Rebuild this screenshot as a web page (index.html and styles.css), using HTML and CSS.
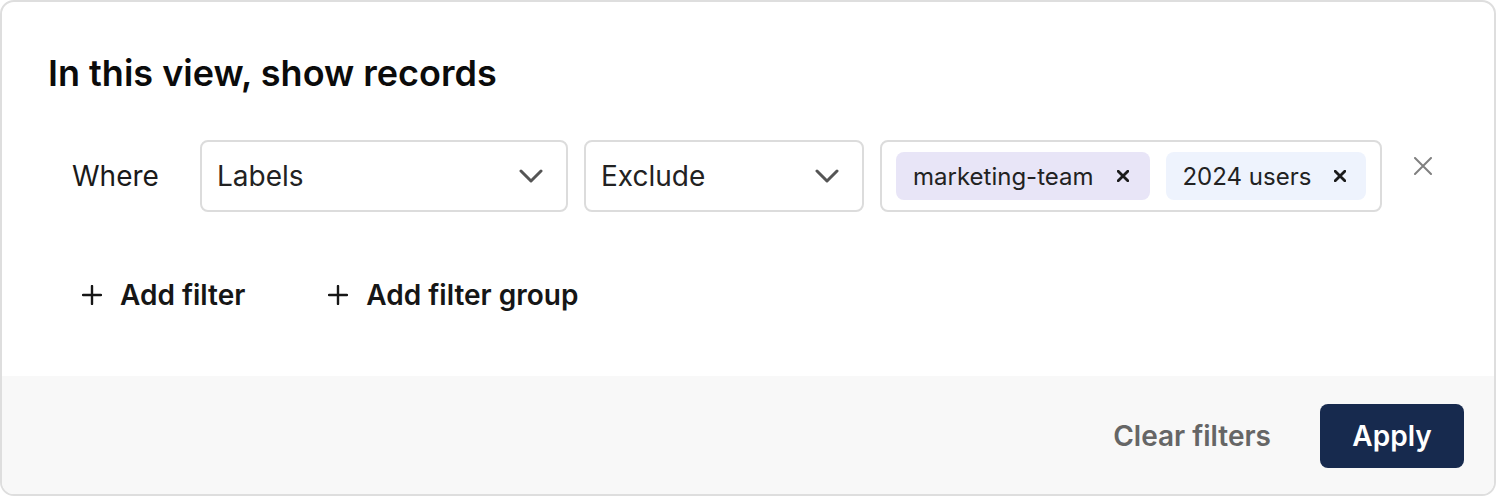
FILE: index.html
```html
<!DOCTYPE html>
<html lang="en">
<head>
  <meta charset="UTF-8">
  <title>Filters</title>
  <link rel="stylesheet" href="styles.css">
</head>
<body>

<div class="panel">
  <div class="panel-body">
    <h1 class="panel-title">In this view, show records</h1>

    <div class="filter-row">
      <span class="where">Where</span>
      <div class="select select-field">
        <span>Labels</span>
        <svg class="chev" width="24" height="14" viewBox="0 0 24 14"><path d="M2 2l10 10 10-10" fill="none" stroke="#555" stroke-width="3" stroke-linecap="round" stroke-linejoin="round"/></svg>
      </div>
      <div class="select select-op">
        <span>Exclude</span>
        <svg class="chev" width="24" height="14" viewBox="0 0 24 14"><path d="M2 2l10 10 10-10" fill="none" stroke="#555" stroke-width="3" stroke-linecap="round" stroke-linejoin="round"/></svg>
      </div>
      <div class="tags">
        <span class="tag tag-purple">marketing-team
          <svg width="12" height="12" viewBox="0 0 12 12"><path d="M1.2 1.2l9.6 9.6M10.8 1.2l-9.6 9.6" stroke="#1c1c1c" stroke-width="2.8" stroke-linecap="round"/></svg>
        </span>
        <span class="tag tag-blue">2024 users
          <svg width="12" height="12" viewBox="0 0 12 12"><path d="M1.2 1.2l9.6 9.6M10.8 1.2l-9.6 9.6" stroke="#1c1c1c" stroke-width="2.8" stroke-linecap="round"/></svg>
        </span>
      </div>
      <button class="remove" title="Remove">
        <svg width="18" height="18" viewBox="0 0 18 18"><path d="M1 1l16 16M17 1L1 17" stroke="#808080" stroke-width="2" stroke-linecap="round"/></svg>
      </button>
    </div>

    <div class="add-row">
      <button class="add-btn">
        <svg class="plus" width="20" height="20" viewBox="0 0 20 20"><path d="M10 1v18M1 10h18" stroke="#161616" stroke-width="2.4" stroke-linecap="round"/></svg>
        Add filter
      </button>
      <button class="add-btn">
        <svg class="plus" width="20" height="20" viewBox="0 0 20 20"><path d="M10 1v18M1 10h18" stroke="#161616" stroke-width="2.4" stroke-linecap="round"/></svg>
        Add filter group
      </button>
    </div>
  </div>

  <div class="panel-footer">
    <button class="clear-btn">Clear filters</button>
    <button class="apply-btn">Apply</button>
  </div>
</div>

</body>
</html>
```

FILE: styles.css
```css
* { box-sizing: border-box; }
body { margin:0; font-family: Inter, "Noto Sans", sans-serif; color:#111; background:#fff; }
button { font-family:inherit; border:none; background:none; padding:0; cursor:pointer; }

.panel { width:1496px; height:496px; border:2px solid #dedede; border-radius:14px; overflow:hidden; display:flex; flex-direction:column; background:#fff; }
.panel-body { flex:1; padding:0 46px; }
.panel-title { margin:50px 0 0; font-size:36px; font-weight:600; line-height:42px; color:#0b0b0b; }

.filter-row { display:flex; align-items:center; margin-top:46px; padding-left:24px; }
.where { width:128px; font-size:28px; color:#1a1a1a; }
.select { height:72px; border:2px solid #dcdcdc; border-radius:8px; display:flex; align-items:center; justify-content:space-between; padding:0 23px 0 15px; font-size:28px; color:#222; margin-right:16px; }
.select-field { width:368px; }
.select-op { width:280px; }
.tags { width:502px; height:72px; border:2px solid #dcdcdc; border-radius:8px; display:flex; align-items:center; gap:16px; padding:0 14px; }
.tag { flex:none; white-space:nowrap; height:48px; border-radius:8px; display:flex; align-items:center; gap:24px; padding:0 21px 0 17px; font-size:24px; color:#222; }
.tag-purple { background:#e8e5f7; }
.tag-blue { background:#eef3fd; padding:0 20px 0 16px; gap:23px; }
.remove { margin-left:32px; margin-top:-20px; width:18px; height:18px; display:flex; }

.add-row { display:flex; gap:83px; margin-top:66px; padding-left:34px; }
.add-btn { display:flex; align-items:center; gap:18px; font-size:28px; font-weight:600; color:#161616; }

.panel-footer { height:118px; background:#f8f8f8; display:flex; align-items:center; justify-content:flex-end; padding:2px 30px 0 0; gap:49px; }
.clear-btn { font-size:28px; font-weight:600; color:#666; }
.apply-btn { width:144px; height:64px; border-radius:8px; background:#172a4e; color:#fff; font-size:28px; font-weight:600; }
```
